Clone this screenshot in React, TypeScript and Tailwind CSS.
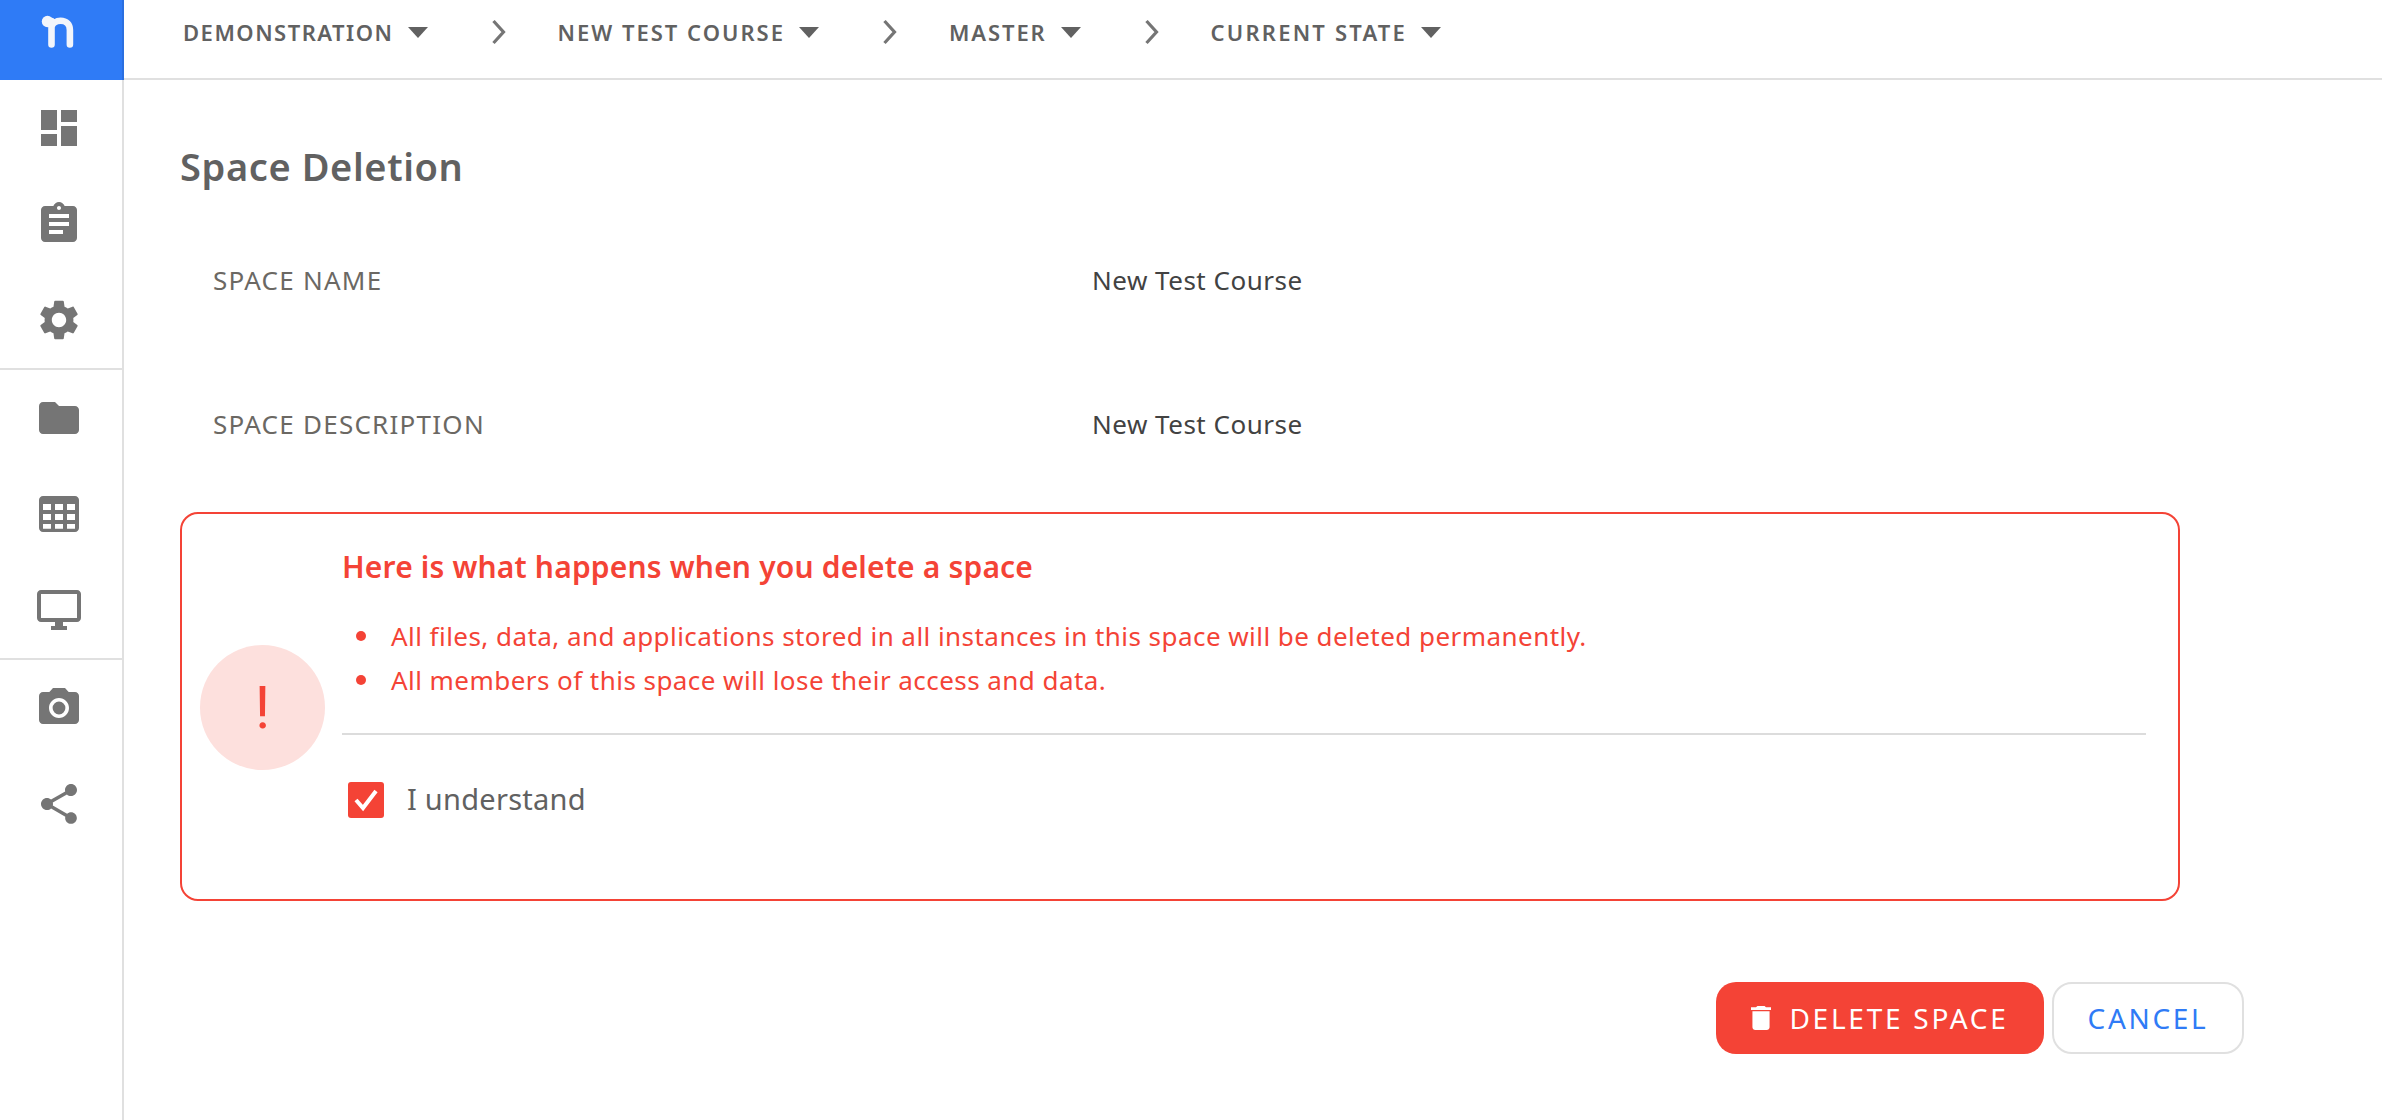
import React from 'react';

const FONT = "font-['Noto_Sans','Lato',sans-serif]";

const icons: { key: string; d: string }[][] = [
  [
    { key: 'dashboard', d: 'M3 13h8V3H3v10zm0 8h8v-6H3v6zm10 0h8V11h-8v10zm0-18v6h8V3h-8z' },
    { key: 'assignment', d: 'M19 3h-4.18C14.4 1.84 13.3 1 12 1c-1.3 0-2.4.84-2.82 2H5c-1.1 0-2 .9-2 2v14c0 1.1.9 2 2 2h14c1.1 0 2-.9 2-2V5c0-1.1-.9-2-2-2zm-7 0c.55 0 1 .45 1 1s-.45 1-1 1-1-.45-1-1 .45-1 1-1zm2 14H7v-2h7v2zm3-4H7v-2h10v2zm0-4H7V7h10v2z' },
    { key: 'settings', d: 'M19.14 12.94c.04-.3.06-.61.06-.94 0-.32-.02-.64-.07-.94l2.03-1.58c.18-.14.23-.41.12-.61l-1.92-3.32c-.12-.22-.37-.29-.59-.22l-2.39.96c-.5-.38-1.03-.7-1.62-.94l-.36-2.54c-.04-.24-.24-.41-.48-.41h-3.84c-.24 0-.43.17-.47.41l-.36 2.54c-.59.24-1.13.57-1.62.94l-2.39-.96c-.22-.08-.47 0-.59.22L2.74 8.87c-.12.21-.08.47.12.61l2.03 1.58c-.05.3-.09.63-.09.94s.02.64.07.94l-2.03 1.58c-.18.14-.23.41-.12.61l1.92 3.32c.12.22.37.29.59.22l2.39-.96c.5.38 1.03.7 1.62.94l.36 2.54c.05.24.24.41.48.41h3.84c.24 0 .44-.17.47-.41l.36-2.54c.59-.24 1.13-.56 1.62-.94l2.39.96c.22.08.47 0 .59-.22l1.92-3.32c.12-.22.07-.47-.12-.61l-2.01-1.58zM12 15.6c-1.98 0-3.6-1.62-3.6-3.6s1.62-3.6 3.6-3.6 3.6 1.62 3.6 3.6-1.62 3.6-3.6 3.6z' },
  ],
  [
    { key: 'folder', d: 'M10 4H4c-1.1 0-1.99.9-1.99 2L2 18c0 1.1.9 2 2 2h16c1.1 0 2-.9 2-2V8c0-1.1-.9-2-2-2h-8l-2-2z' },
    { key: 'table', d: 'M4 3h16c1.1 0 2 .9 2 2v14c0 1.1-.9 2-2 2H4c-1.1 0-2-.9-2-2V5c0-1.1.9-2 2-2zm0 4v3h4V7H4zm6 0v3h4V7h-4zm6 0v3h4V7h-4zM4 12v3h4v-3H4zm6 0v3h4v-3h-4zm6 0v3h4v-3h-4zM4 17v2.4h4V17H4zm6 0v2.4h4V17h-4zm6 0v2.4h4V17h-4z' },
    { key: 'desktop', d: 'M21 2H3c-1.1 0-2 .9-2 2v12c0 1.1.9 2 2 2h7v2H8v2h8v-2h-2v-2h7c1.1 0 2-.9 2-2V4c0-1.1-.9-2-2-2zm0 14H3V4h18v12z' },
  ],
  [
    { key: 'camera', d: 'M12 8.8a3.2 3.2 0 1 0 0 6.4 3.2 3.2 0 0 0 0-6.4zM9 2L7.17 4H4c-1.1 0-2 .9-2 2v12c0 1.1.9 2 2 2h16c1.1 0 2-.9 2-2V6c0-1.1-.9-2-2-2h-3.17L15 2H9zm3 15c-2.76 0-5-2.24-5-5s2.24-5 5-5 5 2.24 5 5-2.24 5-5 5z' },
    { key: 'share', d: 'M18 16.08c-.76 0-1.44.3-1.96.77L8.91 12.7c.05-.23.09-.46.09-.7s-.04-.47-.09-.7l7.05-4.11c.54.5 1.25.81 2.04.81 1.66 0 3-1.34 3-3s-1.34-3-3-3-3 1.34-3 3c0 .24.04.47.09.7L8.04 9.81C7.5 9.31 6.79 9 6 9c-1.66 0-3 1.34-3 3s1.34 3 3 3c.79 0 1.5-.31 2.04-.81l7.12 4.16c-.05.21-.08.43-.08.65 0 1.61 1.31 2.92 2.92 2.92 1.61 0 2.92-1.31 2.92-2.92s-1.31-2.92-2.92-2.92z' },
  ],
];

const crumbs = [
  { label: 'DEMONSTRATION', tracking: 'tracking-[1.5px]' },
  { label: 'NEW TEST COURSE', tracking: 'tracking-[2px]' },
  { label: 'MASTER', tracking: 'tracking-[1.9px]' },
  { label: 'CURRENT STATE', tracking: 'tracking-[2.2px]' },
];

const Sidebar = () => (
  <div className="flex w-[124px] shrink-0 flex-col border-r-2 border-[#e0e0e0]">
    <div className="flex h-[80px] w-[124px] shrink-0 items-center justify-center border-r-2 border-[#2a6fe0] bg-[#2f7bf6] pr-[7px] pb-[16px]">
      <svg width="40" height="40" viewBox="0 0 40 40" fill="none">
        <circle cx="9.5" cy="9.5" r="5.7" fill="#f2f5fb" />
        <path d="M13.5 32.5V9M13.5 15c1-4 5-6.2 9-6.2 6 0 9.4 3.7 9.4 9.2v14.5" stroke="#f2f5fb" strokeWidth="6.6" strokeLinecap="round" />
      </svg>
    </div>
    {icons.map((group, i) => (
      <div key={i} className={i < 2 ? 'border-b-2 border-[#e0e0e0]' : ''}>
        {group.map(icon => (
          <div key={icon.key} className="flex h-[96px] items-center justify-center pr-[4px]">
            <svg width="48" height="48" viewBox="0 0 24 24" fill="#757575">
              <path d={icon.d} fillRule="evenodd" />
            </svg>
          </div>
        ))}
      </div>
    ))}
  </div>
);

const Header = () => (
  <div className="flex h-[80px] shrink-0 items-center border-b-2 border-[#e0e0e0] pb-[14px] pl-[59px]">
    {crumbs.map((crumb, i) => (
      <div key={crumb.label} className="flex items-center">
        <span className={`text-[22px] leading-none font-semibold text-[#616161] ${crumb.tracking}`}>{crumb.label}</span>
        <svg className="ml-[14px]" width="20" height="11" viewBox="0 0 20 11" fill="#616161">
          <path d="M0 0h20L10 11z" />
        </svg>
        {i < crumbs.length - 1 && (
          <svg className="mr-[51px] ml-[63px]" width="16" height="26" viewBox="0 0 16 26" fill="none">
            <path d="M2.5 2l10 11-10 11" stroke="#757575" strokeWidth="3.2" />
          </svg>
        )}
      </div>
    ))}
  </div>
);

const InfoRow = ({ label, value }: { label: string; value: string }) => (
  <div className="flex h-[144px] items-center pl-[33px]">
    <span className="w-[879px] text-[26px] tracking-[1.25px] text-[#6b6863]">{label}</span>
    <span className="text-[26px] tracking-[0.5px] text-[#424242]">{value}</span>
  </div>
);

export default function App() {
  return (
    <div className={`flex h-screen w-full overflow-hidden bg-white ${FONT}`}>
      <Sidebar />
      <div className="flex min-w-0 flex-1 flex-col">
        <Header />
        <div className="pl-[56px]">
          <h1 className="mt-[62px] h-[48px] text-[38px] leading-[48px] font-semibold tracking-[0.6px] text-[#616161]">Space Deletion</h1>
          <div className="mt-[18px]">
            <InfoRow label="SPACE NAME" value="New Test Course" />
            <InfoRow label="SPACE DESCRIPTION" value="New Test Course" />
          </div>

          <div className="mt-[16px] flex h-[389px] w-[2000px] items-center rounded-[18px] border-2 border-[#f44336] pl-[18px]">
            <div className="mt-[2px] flex h-[125px] w-[125px] shrink-0 items-center justify-center rounded-full bg-[#fde0dd] font-['Roboto',sans-serif] text-[60px] text-[#f44336]">!</div>
            <div className="ml-[17px] flex h-full flex-1 flex-col pt-[33px] pr-[32px]">
              <h2 className="h-[40px] text-[30px] leading-[40px] font-semibold tracking-[0.17px] text-[#f44336]">Here is what happens when you delete a space</h2>
              <ul className="mt-[27px] text-[26px] leading-[44px] tracking-[0.45px] text-[#f44336]">
                <li className="flex items-center">
                  <span className="mr-[25px] ml-[14px] h-[10px] w-[10px] rounded-full bg-[#f44336]" />
                  All files, data, and applications stored in all instances in this space will be deleted permanently.
                </li>
                <li className="flex items-center">
                  <span className="mr-[25px] ml-[14px] h-[10px] w-[10px] rounded-full bg-[#f44336]" />
                  All members of this space will lose their access and data.
                </li>
              </ul>
              <div className="mt-[31px] h-[2px] bg-[#dcdcdc]" />
              <label className="mt-[47px] ml-[6px] flex h-[36px] items-center">
                <span className="flex h-[36px] w-[36px] items-center justify-center rounded-[3px] bg-[#f44336]">
                  <svg width="28" height="28" viewBox="0 0 28 28" fill="none">
                    <path d="M4 14l7 8L24 5" stroke="#fff" strokeWidth="4" />
                  </svg>
                </span>
                <span className="ml-[23px] pb-[2px] text-[29px] tracking-[0.25px] text-[#616161]">I understand</span>
              </label>
            </div>
          </div>

          <div className="mt-[81px] ml-[1536px] flex gap-[8px]">
            <button className="flex h-[72px] w-[328px] items-center justify-center rounded-[20px] bg-[#f44336] text-[28px] tracking-[2.75px] text-white">
              <svg className="mr-[18px]" width="20" height="24" viewBox="5 3 14 18" preserveAspectRatio="none" fill="#fff">
                <path d="M6 19c0 1.1.9 2 2 2h8c1.1 0 2-.9 2-2V7H6v12zM19 4h-3.5l-1-1h-5l-1 1H5v2h14V4z" />
              </svg>
              DELETE SPACE
            </button>
            <button className="h-[72px] w-[192px] rounded-[20px] border-2 border-[#e0e0e0] text-[28px] tracking-[2.7px] text-[#2f7bf6]">CANCEL</button>
          </div>
        </div>
      </div>
    </div>
  );
}
